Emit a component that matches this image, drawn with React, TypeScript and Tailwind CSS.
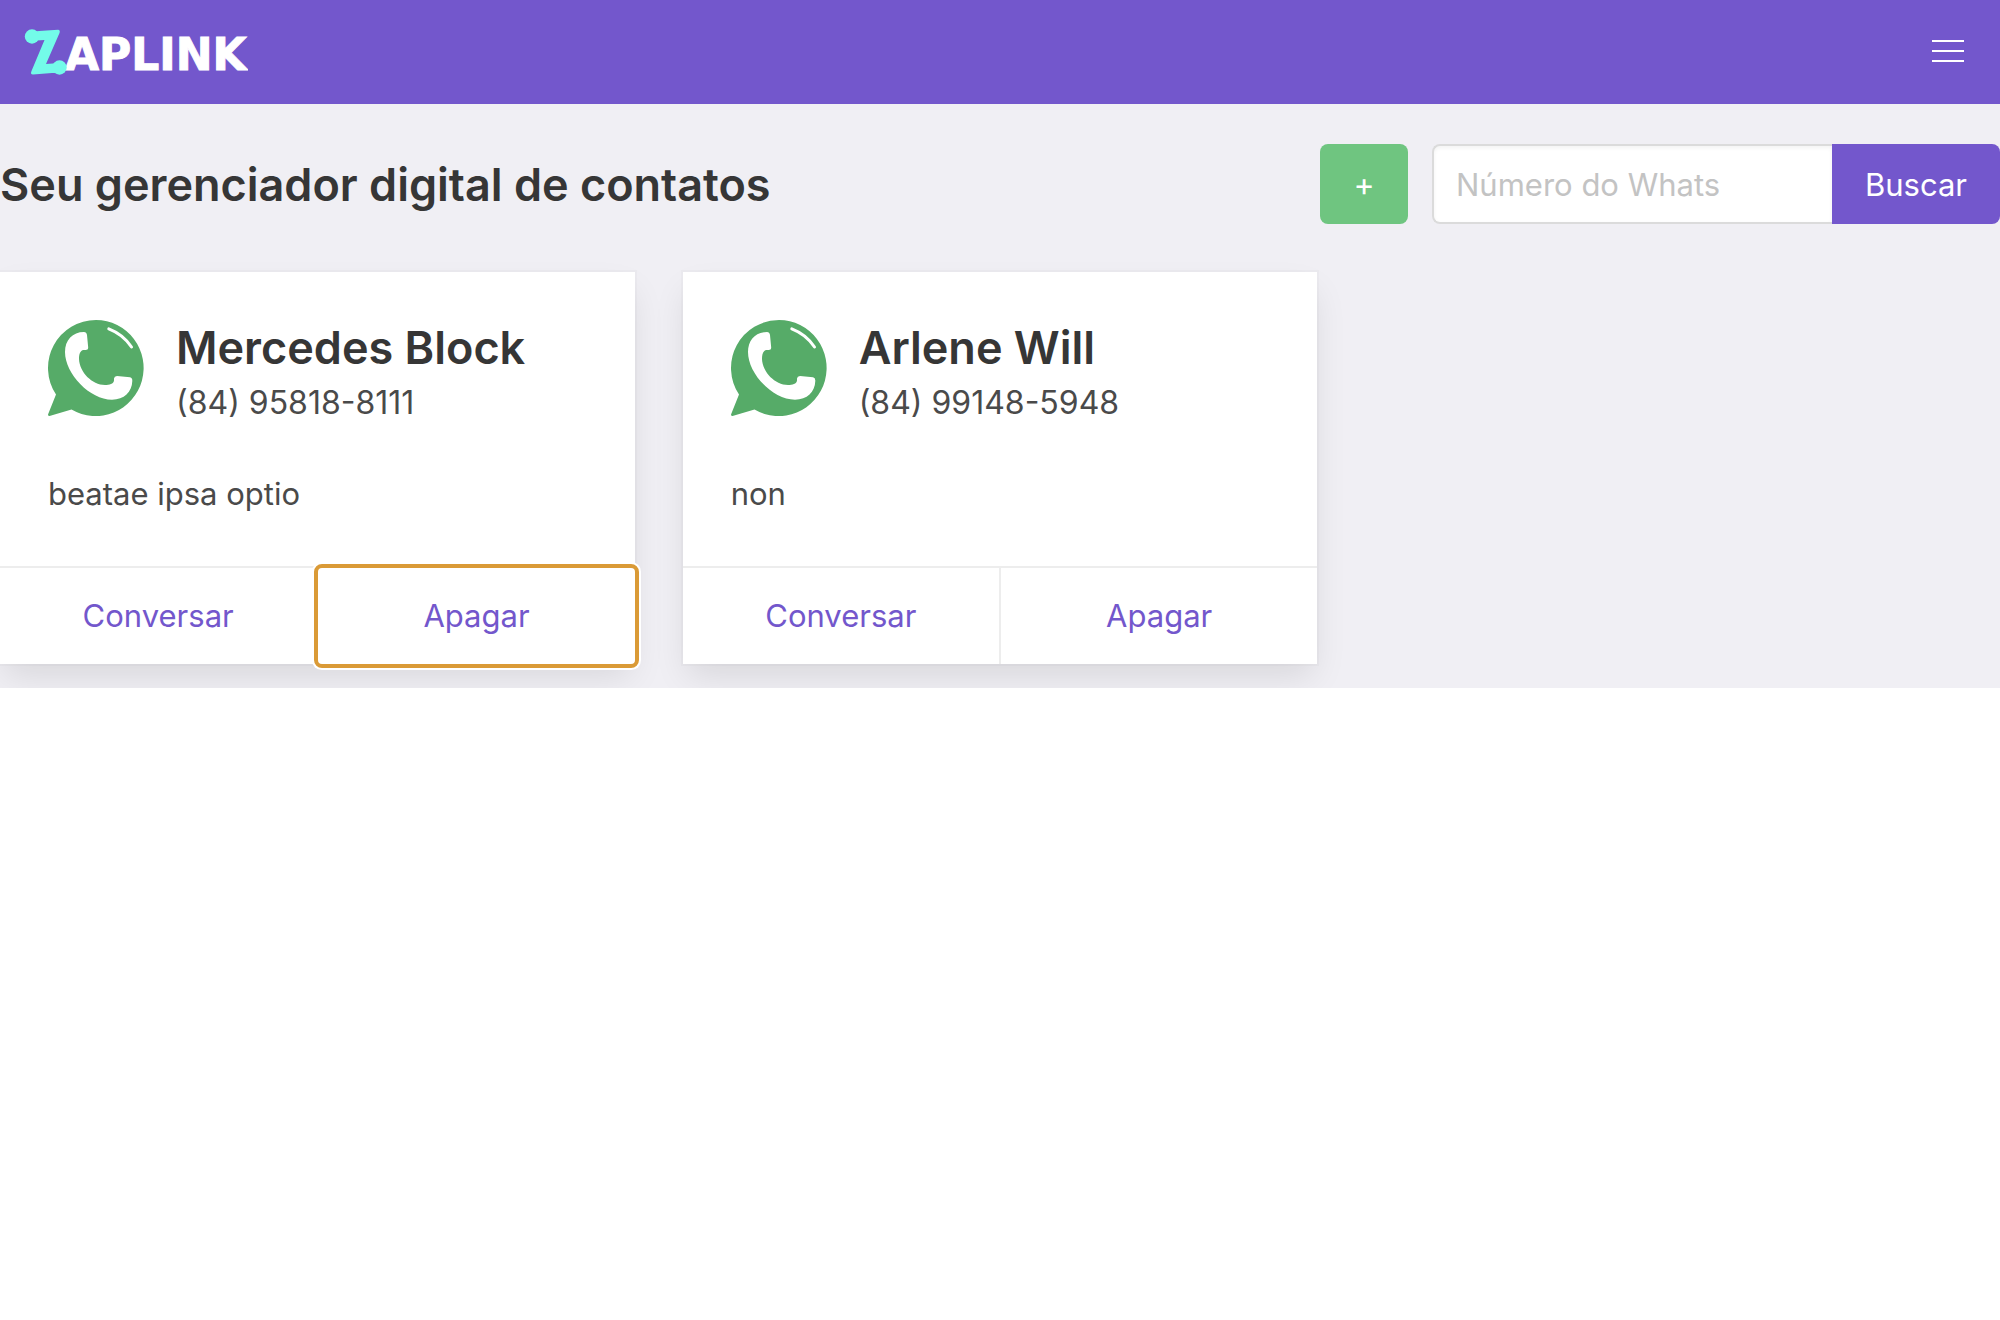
import React from "react";

type Contact = {
  name: string;
  phone: string;
  note: string;
  highlighted?: boolean;
};

const contacts: Contact[] = [
  { name: "Mercedes Block", phone: "(84) 95818-8111", note: "beatae ipsa optio", highlighted: true },
  { name: "Arlene Will", phone: "(84) 99148-5948", note: "non" },
];

function Logo() {
  return (
    <svg width="224" height="56" viewBox="0 0 224 56" role="img" aria-label="Zaplink">
      <text
        x="41"
        y="46"
        fill="#fff"
        stroke="#fff"
        strokeWidth="1"
        fontFamily="'DejaVu Sans', sans-serif"
        fontWeight="700"
        fontSize="44"
      >
        APLINK
      </text>
      <g fill="#73fbe9">
        <circle cx="8" cy="12.500" r="7.200" />
        <circle cx="35.500" cy="43.500" r="7.200" />
        <path d="M8 6 Q11 7.500 15 7 L34 5.800 Q36.500 6 35.500 9 L22 40 L29 39.500 L36 37 L36 50 Q32 48.500 28 49 L9 50.500 Q6 50.500 7.500 47 L20.500 16 L13 16.500 L8 18 Z" />
      </g>
    </svg>
  );
}

function WhatsIcon() {
  return (
    <svg className="size-24 shrink-0" viewBox="0 0 96 96" aria-hidden="true">
      <path
        fill="#56ab68"
        d="M48 0A48 48 0 1 1 23.500 89.500L1.500 96Q0 96 0 94.500L8 74.500A48 48 0 0 1 48 0Z"
      />
      <path
        fill="#fff"
        d="M36 12Q38.500 12 39 15L40.200 27.500Q40.200 30 37.500 30H35.500C32 30.500 31 34.500 31 39C31.500 52 44 65 57 65C61.500 65 65.500 64 66 60.500V58.500Q66.300 56 69 56L82 57.300Q84.500 57.800 84.300 61C84 72 76 79.700 64 79.700C42 79.700 17 54 17 32C17 20 24.500 12 36 12Z"
      />
      <path d="M60.800 8.800Q75.500 14.500 83.500 27" fill="none" stroke="#fff" strokeWidth="3" strokeLinecap="round" />
    </svg>
  );
}

function ContactCard({ contact }: { contact: Contact }) {
  const action = "flex flex-1 items-center justify-center p-6 text-[31px] leading-[48px] text-[#7357cc]";
  return (
    <article className="flex flex-col bg-white shadow-[0_16px_32px_-4px_rgba(10,10,10,0.1),0_0_0_2px_rgba(10,10,10,0.02)]">
      <div className="p-12">
        <div className="mb-11 flex items-start gap-8">
          <WhatsIcon />
          <div className="pt-1">
            <h2 className="text-[45px] leading-[48px] font-semibold text-[#363636]">{contact.name}</h2>
            <p className="mt-2 text-[32px] leading-[46px]">{contact.phone}</p>
          </div>
        </div>
        <p className="text-[31px] leading-[48px]">{contact.note}</p>
      </div>
      <footer className="flex border-t-2 border-[#ededed]">
        <a href="#conversar" className={action + " border-r-2 border-[#ededed]"}>
          Conversar
        </a>
        <button
          type="button"
          className={
            contact.highlighted
              ? action + " rounded-sm outline-4 outline-[#da9a36] shadow-[0_0_0_6px_#fff]"
              : action
          }
        >
          Apagar
        </button>
      </footer>
    </article>
  );
}

export default function App() {
  return (
    <div className="bg-white font-[Inter,sans-serif] text-[#4a4a4a]">
      <header className="flex h-26 items-center justify-between bg-[#7357cc] px-6">
        <a href="#inicio">
          <Logo />
        </a>
        <button type="button" aria-label="Menu" className="mr-3 mb-0.5 flex flex-col gap-2">
          <span className="h-0.5 w-8 bg-white" />
          <span className="h-0.5 w-8 bg-white" />
          <span className="h-0.5 w-8 bg-white" />
        </button>
      </header>
      <main className="bg-[#f0eff4] pt-10 pb-6">
        <div className="mb-12 flex items-center justify-between">
          <h1 className="pt-0.5 text-[45px] leading-[54px] font-semibold text-[#363636]">
            Seu gerenciador digital de contatos
          </h1>
          <div className="flex gap-6">
            <button
              type="button"
              aria-label="Adicionar contato"
              className="h-20 w-22 rounded-lg bg-[#6fc580] pt-0.5 text-[32px] text-white"
            >
              +
            </button>
            <form className="flex" onSubmit={(e) => e.preventDefault()}>
              <input
                type="text"
                aria-label="Número do Whats"
                placeholder="Número do Whats"
                className="h-20 w-100 rounded-l-lg border-2 border-r-0 border-[#dbdbdb] bg-white px-[22px] text-[31px] shadow-[inset_0_2px_4px_rgba(10,10,10,0.05)] placeholder:text-[#c3c3c3]"
              />
              <button type="submit" className="h-20 w-42 rounded-r-lg bg-[#7357cc] pt-0.5 text-[31px] text-white">
                Buscar
              </button>
            </form>
          </div>
        </div>
        <div className="grid grid-cols-3 gap-12">
          {contacts.map((c) => (
            <ContactCard key={c.name} contact={c} />
          ))}
        </div>
      </main>
    </div>
  );
}
